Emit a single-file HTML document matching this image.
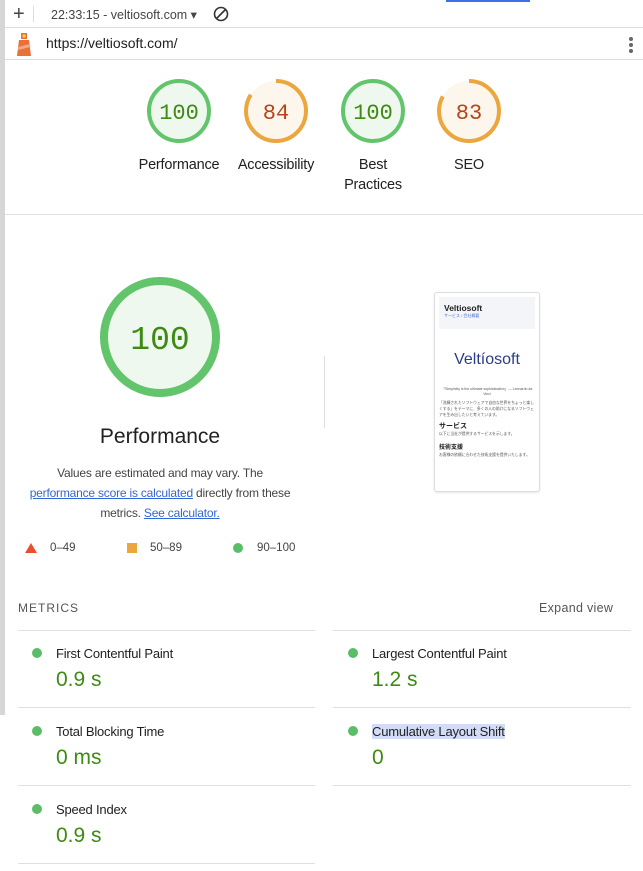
<!DOCTYPE html>
<html><head><meta charset="utf-8"><style>
*{margin:0;padding:0;box-sizing:border-box}
body{width:643px;height:871px;background:#fff;font-family:"Liberation Sans",sans-serif;position:relative;overflow:hidden;color:#212121}
.a{position:absolute}
.lab{font-size:14.5px;text-align:center;width:100px;line-height:20px;letter-spacing:-0.2px}
.ml{font-size:13px;color:#212121;letter-spacing:-0.2px}
.mv{font-size:21px;color:#3e8a12}
.dot{width:10px;height:10px;border-radius:50%;background:#5bbd68}
.hr{height:1px;background:#e0e0e0}
</style></head><body>
<div class="a" style="left:0;top:0;width:5px;height:715px;background:#d6d6d6"></div>
<div class="a" style="left:5px;top:0;width:638px;height:28px;border-bottom:1px solid #ddd;background:#fff"></div>
<div class="a" style="left:446px;top:0;width:84px;height:2px;background:#3b6ee8"></div>
<div class="a" style="left:13px;top:3px;font-size:20px;color:#444">+</div>
<div class="a" style="left:33px;top:6px;width:1px;height:16px;background:#ddd"></div>
<div class="a" style="left:51px;top:7px;font-size:12.5px;color:#444">22:33:15 - veltiosoft.com ▾</div>
<svg class="a" style="left:213px;top:6px" width="16" height="16"><circle cx="8" cy="8" r="6.5" fill="none" stroke="#333" stroke-width="1.6"/><line x1="3.5" y1="12.5" x2="12.5" y2="3.5" stroke="#333" stroke-width="1.6"/></svg>
<div class="a" style="left:5px;top:59px;width:638px;height:1px;background:#ddd"></div>
<svg class="a" style="left:14px;top:31px" width="22" height="26"><rect x="7" y="2" width="6" height="6" fill="#e8713a"/><rect x="8.5" y="3.5" width="3" height="3" fill="#f5d33a"/><polygon points="5,9 15,9 17,25 3,25" fill="#e8713a"/><polygon points="4.3,16 16,13 16.3,16 4,19" fill="#f2a68a"/></svg>
<div class="a" style="left:46px;top:35px;font-size:14px;color:#212121">https://veltiosoft.com/</div>
<div class="a" style="left:629px;top:37px;width:4px;height:4px;border-radius:2px;background:#666;box-shadow:0 6px 0 #666,0 12px 0 #666"></div>

<svg class="a" style="left:0;top:0" width="643" height="420">
<g font-family="Liberation Mono,monospace" font-size="22" text-anchor="middle">
<circle cx="179" cy="111" r="30" fill="#eef8ee" stroke="#62c46b" stroke-width="4"/>
<text x="179" y="119" fill="#3e8a12">100</text>
<circle cx="276" cy="111" r="30" fill="#fdf6ec"/>
<circle cx="276" cy="111" r="30" fill="none" stroke="#eba63d" stroke-width="4" stroke-dasharray="158.3 200" transform="rotate(-90 276 111)"/>
<text x="276" y="119" fill="#b5441a">84</text>
<circle cx="373" cy="111" r="30" fill="#eef8ee" stroke="#62c46b" stroke-width="4"/>
<text x="373" y="119" fill="#3e8a12">100</text>
<circle cx="469" cy="111" r="30" fill="#fdf6ec"/>
<circle cx="469" cy="111" r="30" fill="none" stroke="#eba63d" stroke-width="4" stroke-dasharray="156.4 200" transform="rotate(-90 469 111)"/>
<text x="469" y="119" fill="#b5441a">83</text>
<circle cx="160" cy="337" r="56" fill="#eef8ee" stroke="#62c46b" stroke-width="8"/>
<text x="160" y="349" font-size="33" fill="#3e8a12">100</text>
</g></svg>
<div class="a lab" style="left:129px;top:155px">Performance</div>
<div class="a lab" style="left:226px;top:155px">Accessibility</div>
<div class="a lab" style="left:323px;top:155px">Best<br>Practices</div>
<div class="a lab" style="left:419px;top:155px">SEO</div>
<div class="a" style="left:5px;top:214px;width:638px;height:1px;background:#e0e0e0"></div>

<div class="a" style="left:60px;top:425px;width:200px;text-align:center;font-size:21px">Performance</div>
<div class="a" style="left:0px;top:463px;width:320px;text-align:center;font-size:12px;letter-spacing:-0.2px;line-height:20px;color:#444;white-space:nowrap">Values are estimated and may vary. The<br><span style="color:#3367d6;text-decoration:underline">performance score is calculated</span> directly from these<br>metrics. <span style="color:#3367d6;text-decoration:underline">See calculator.</span></div>
<svg class="a" style="left:25px;top:543px" width="12" height="11"><polygon points="6,0 12,10 0,10" fill="#e8502e"/></svg>
<div class="a" style="left:50px;top:542px;font-size:11.5px;color:#444">0–49</div>
<div class="a" style="left:127px;top:543px;width:10px;height:10px;background:#eba63d"></div>
<div class="a" style="left:150px;top:542px;font-size:11.5px;color:#444">50–89</div>
<div class="a dot" style="left:233px;top:543px"></div>
<div class="a" style="left:257px;top:542px;font-size:11.5px;color:#444">90–100</div>
<div class="a" style="left:324px;top:356px;width:1px;height:72px;background:#ddd"></div>

<div class="a" style="left:434px;top:292px;width:106px;height:200px;border:1px solid #ddd;border-radius:3px;background:#fff;box-shadow:0 1px 2px rgba(0,0,0,.1);font-family:'Liberation Sans','Noto Sans CJK JP',sans-serif">
<div style="margin:4px 4px 0;height:32px;background:#f3f5f8;padding:6px 5px;font-size:8.5px;font-weight:bold">Veltiosoft<div style="font-size:4px;color:#4a6fd8;font-weight:normal">サービス / 会社概要</div></div>
<div style="text-align:center;margin-top:22px;font-size:16px;color:#2a3c8a">Veltíosoft</div>
<div style="font-size:3.5px;color:#555;padding:0 4px;margin-top:18px;text-align:center">「Simplicity is the ultimate sophistication」— Leonardo da Vinci</div>
<div style="font-size:3.8px;color:#555;padding:4px 4px 0;line-height:6px">「洗練されたソフトウェアで自由な世界をちょっと楽しくする」をテーマに、多くの人の助けになるソフトウェアを生み出したいと考えています。</div>
<div style="font-size:7px;font-weight:bold;padding:3px 4px 0">サービス</div>
<div style="font-size:3.8px;color:#555;padding:1px 4px">以下に当社が提供するサービスを示します。</div>
<div style="font-size:6px;font-weight:bold;padding:4px 4px 0">技術支援</div>
<div style="font-size:3.8px;color:#555;padding:1px 4px;line-height:6px">お客様の依頼に合わせた技術支援を提供いたします。</div>
</div>

<div class="a" style="left:18px;top:601px;font-size:12px;letter-spacing:1px;color:#555">METRICS</div>
<div class="a" style="left:539px;top:601px;font-size:12.5px;color:#555;letter-spacing:.3px">Expand view</div>
<div class="a hr" style="left:18px;top:630px;width:297px"></div>
<div class="a hr" style="left:333px;top:630px;width:298px"></div>
<div class="a hr" style="left:18px;top:707px;width:297px"></div>
<div class="a hr" style="left:333px;top:707px;width:298px"></div>
<div class="a hr" style="left:18px;top:785px;width:297px"></div>
<div class="a hr" style="left:333px;top:785px;width:298px"></div>
<div class="a hr" style="left:18px;top:863px;width:297px"></div>

<div class="a dot" style="left:32px;top:648px"></div><div class="a ml" style="left:56px;top:646px">First Contentful Paint</div><div class="a mv" style="left:56px;top:668px">0.9 s</div>
<div class="a dot" style="left:348px;top:648px"></div><div class="a ml" style="left:372px;top:646px">Largest Contentful Paint</div><div class="a mv" style="left:372px;top:668px">1.2 s</div>
<div class="a dot" style="left:32px;top:726px"></div><div class="a ml" style="left:56px;top:724px">Total Blocking Time</div><div class="a mv" style="left:56px;top:746px">0 ms</div>
<div class="a dot" style="left:348px;top:726px"></div><div class="a ml" style="left:372px;top:724px;background:#d3dcf7">Cumulative Layout Shift</div><div class="a mv" style="left:372px;top:746px">0</div>
<div class="a dot" style="left:32px;top:804px"></div><div class="a ml" style="left:56px;top:802px">Speed Index</div><div class="a mv" style="left:56px;top:824px">0.9 s</div>
</body></html>
